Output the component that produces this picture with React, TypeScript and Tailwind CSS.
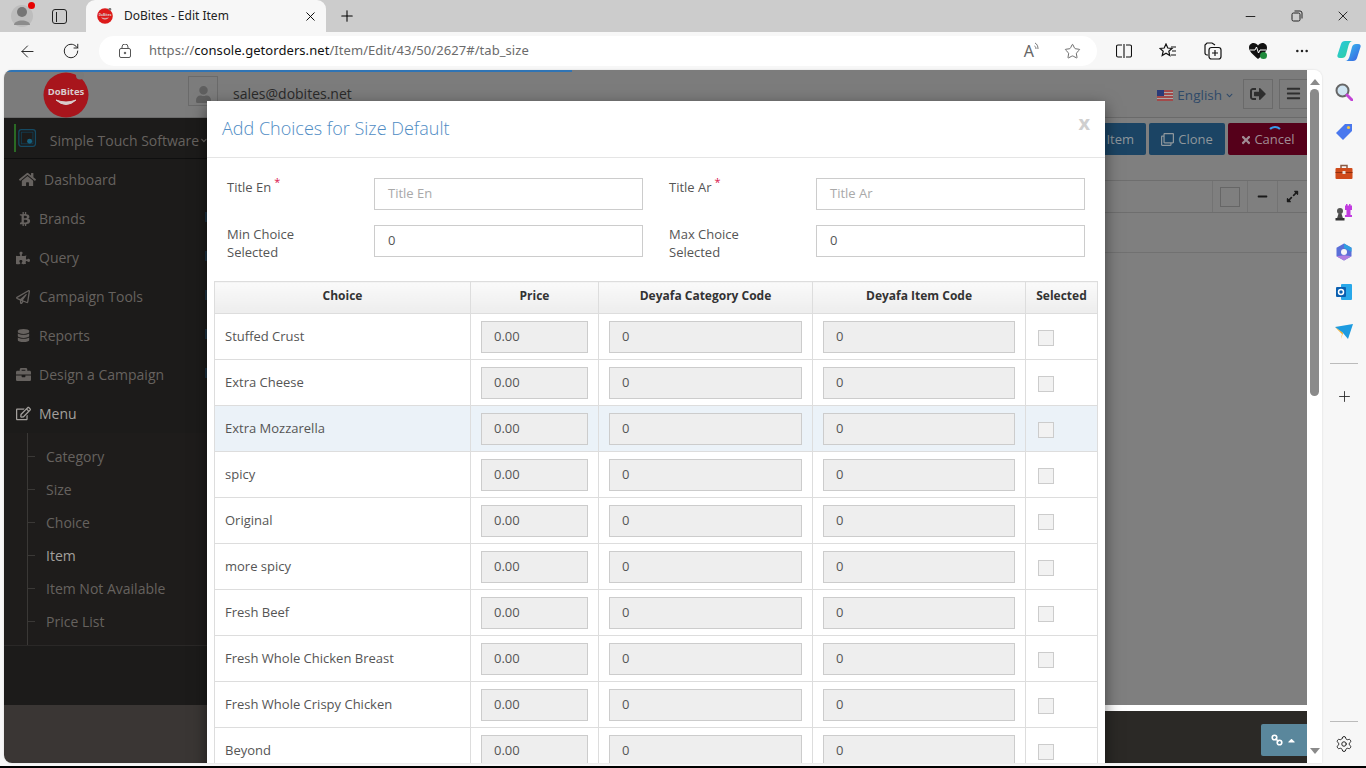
import { ArrowLeft, Minus, MoreHorizontal, Plus, RotateCw, Settings, Star, X } from "lucide-react";
import {
  FaBars,
  FaBriefcase,
  FaBtc,
  FaChevronDown,
  FaCaretUp,
  FaDatabase,
  FaHome,
  FaMinus,
  FaPuzzlePiece,
  FaRegClone,
  FaRegEdit,
  FaRegPaperPlane,
  FaExpandAlt,
  FaSignOutAlt,
  FaTimes,
  FaUser,
} from "react-icons/fa";

const choices = [
  "Stuffed Crust",
  "Extra Cheese",
  "Extra Mozzarella",
  "spicy",
  "Original",
  "more spicy",
  "Fresh Beef",
  "Fresh Whole Chicken Breast",
  "Fresh Whole Crispy Chicken",
  "Beyond",
];

const sideItems = [
  { label: "Brands", icon: <FaBtc size={14} className="ml-[2px]" /> },
  { label: "Query", icon: <FaPuzzlePiece size={14} /> },
  { label: "Campaign Tools", icon: <FaRegPaperPlane size={14} /> },
  { label: "Reports", icon: <FaDatabase size={13} className="ml-[1px]" /> },
  { label: "Design a Campaign", icon: <FaBriefcase size={15} /> },
];

const subItems = ["Category", "Size", "Choice", "Item", "Item Not Available", "Price List"];

function Logo({ size }: { size: number }) {
  return (
    <svg width={size} height={size} viewBox="0 0 46 46" className="shrink-0">
      <circle cx="23" cy="23" r="22.5" fill="currentColor" />
      <circle cx="37" cy="3.500" r="4" fill="#7a7a7a" />
      <text x="23" y="23" textAnchor="middle" fontSize="9.500" fontWeight="700" fill="#d9cccc" fontFamily="'Open Sans', sans-serif">
        DoBites
      </text>
      <path d="M13 28 Q23 37 33 28 Q23 32 13 28Z" fill="#d9cccc" stroke="#d9cccc" strokeWidth="1" />
    </svg>
  );
}

function TabStrip() {
  return (
    <div className="flex h-8 items-center bg-[#cccccc] text-black">
      <div className="relative ml-[11px] flex h-[22px] w-[22px] items-center justify-center rounded-full bg-[#bdbdbd]">
        <svg width="18" height="20" viewBox="0 0 18 20">
          <circle cx="9" cy="6" r="5" fill="#767676" />
          <path d="M1 19 C1 13 17 13 17 19 Z" fill="#8c8c8c" />
        </svg>
        <span className="absolute right-[-2px] top-[-3px] h-[7px] w-[7px] rounded-full bg-[#e60000]" />
      </div>
      <div className="ml-[19px] flex h-[15px] w-[15px] rounded-[3px] border-[1.5px] border-[#222]">
        <span className="mt-[2px] h-[10px] w-[4px] border-r border-[#222]" />
      </div>
      <div className="ml-[19px] flex h-8 w-[240px] items-center rounded-t-[9px] bg-[#f7f7f7] pl-[11px]">
        <span className="text-[#dd1a1a]">
          <Logo size={16} />
        </span>
        <span className="ml-[11px] font-['Noto_Sans',sans-serif] text-[12px] text-[#222]">DoBites - Edit Item</span>
        <X size={15} strokeWidth={1.5} className="ml-[74px]" />
      </div>
      <Plus size={18} strokeWidth={1.4} className="ml-3" />
      <div className="ml-auto flex items-center">
        <Minus size={15} strokeWidth={1.3} />
        <svg width="12" height="12" viewBox="0 0 12 12" fill="none" stroke="#222" className="ml-[33px]">
          <rect x="1" y="3" width="8" height="8" rx="1.5" />
          <path d="M3.5 1h5.5a2 2 0 0 1 2 2v5.5" />
        </svg>
        <X size={16} strokeWidth={1.2} className="ml-[32px] mr-[15px]" />
      </div>
    </div>
  );
}

function ToolBar() {
  return (
    <div className="flex h-[38px] items-center bg-[#f7f7f7] text-[#222]">
      <ArrowLeft size={19} strokeWidth={1.2} className="ml-[18px]" />
      <RotateCw size={18} strokeWidth={1.3} className="ml-[25px]" />
      <div className="ml-[19px] flex h-[30px] w-[998px] items-center rounded-full bg-white pl-[20px] pr-[16px]">
        <svg width="12" height="14" viewBox="0 0 12 14" fill="none" stroke="#555" strokeWidth="1">
          <rect x="0.5" y="4.5" width="11" height="9" rx="1.5" />
          <path d="M3 4.5V3a3 3 0 0 1 6 0v1.5" />
          <circle cx="6" cy="9" r="0.8" fill="#555" />
        </svg>
        <span className="ml-[18px] font-['Noto_Sans',sans-serif] text-[13px] tracking-[0.06px] text-[#6b6b6b]">
          https://<span className="text-[#111]">console.getorders.net</span>/Item/Edit/43/50/2627#/tab_size
        </span>
        <span className="ml-auto flex items-start text-[#666]">
          <span className="font-['Noto_Sans',sans-serif] text-[16px] leading-[18px]">A</span>
          <svg width="6" height="9" viewBox="0 0 6 9" fill="none" stroke="#777">
            <path d="M1 1c2 1 3 3 3 6M0.500 4c1 .5 1.500 1.500 1.500 3" />
          </svg>
        </span>
        <Star size={17} strokeWidth={1.2} className="ml-[24px] text-[#555]" />
      </div>
      <svg width="16" height="14" viewBox="0 0 16 14" fill="none" stroke="#111" strokeWidth="1.100" className="ml-[19px]">
        <path d="M6 1H2a1.500 1.500 0 0 0-1.500 1.500v9A1.500 1.500 0 0 0 2 13h4M10 1h4a1.500 1.500 0 0 1 1.500 1.500v9A1.500 1.500 0 0 1 14 13h-4M8 0v14" />
      </svg>
      <svg width="18" height="16" viewBox="0 0 18 16" fill="none" stroke="#111" strokeWidth="1.2" className="ml-[27px]">
        <path d="M7 1l1.800 4 4.200.4-3.200 2.800 1 4.300L7 10.200 3.200 12.500l1-4.300L1 5.400 5.200 5z" />
        <path d="M12 4h5M13 8h4M12 12h5" />
      </svg>
      <svg width="18" height="18" viewBox="0 0 18 18" fill="none" stroke="#111" strokeWidth="1.2" className="ml-[27px]">
        <path d="M4 13H3a2 2 0 0 1-2-2V3l2-2h5l3 2" />
        <rect x="5" y="5.500" width="12" height="11.500" rx="2.500" />
        <path d="M11 8v6M8 11h6" />
      </svg>
      <svg width="20" height="18" viewBox="0 0 20 18" className="ml-[26px]">
        <path d="M10 17 C4 12 1 9 1 5.500 C1 2.500 3.500 1 5.500 1 C7.500 1 9 2 10 3.500 C11 2 12.500 1 14.500 1 C16.500 1 19 2.500 19 5.500 C19 9 16 12 10 17Z" fill="#111" />
        <path d="M2 8h5l1.500-3 2 6 1.500-3h6" stroke="#fff" strokeWidth="1" fill="none" />
        <circle cx="15.500" cy="13.500" r="3.500" fill="#1f8a3b" />
      </svg>
      <MoreHorizontal size={16} strokeWidth={1.8} className="ml-[26px]" />
      <svg width="24" height="22" viewBox="0 0 24 22" className="ml-[27px]">
        <defs>
          <linearGradient id="cpA" x1="0" y1="0" x2="1" y2="1">
            <stop offset="0" stopColor="#35c6f0" />
            <stop offset="1" stopColor="#3a5ce0" />
          </linearGradient>
          <linearGradient id="cpB" x1="0" y1="0" x2="1" y2="1">
            <stop offset="0" stopColor="#2ac7e0" />
            <stop offset="1" stopColor="#2fd19a" />
          </linearGradient>
        </defs>
        <path d="M8 1h8c-2.500 0-3.800 2-4.500 4.500L9 15c-.6 2-2 3-4 3H3C.5 18 0 16.500.5 15L4 4c.6-2 2-3 4-3z" fill="url(#cpB)" />
        <path d="M16 21H8c2.500 0 3.800-2 4.500-4.500L15 7c.6-2 2-3 4-3h2c2.500 0 3 1.500 2.500 3L20 18c-.6 2-2 3-4 3z" fill="url(#cpA)" />
      </svg>
    </div>
  );
}

function SideRail() {
  return (
    <div className="flex w-[44px] shrink-0 flex-col items-center bg-[#f7f7f7] pt-[13px]">
      <svg width="18" height="18" viewBox="0 0 18 18" fill="none">
        <circle cx="7.500" cy="7.500" r="6" fill="#cfe4f2" stroke="#666" strokeWidth="2" />
        <path d="M12 12l5 5" stroke="#c244d6" strokeWidth="3" strokeLinecap="round" />
      </svg>
      <svg width="18" height="18" viewBox="0 0 18 18" className="mt-[22px]">
        <path d="M10 1h7v7L8 17 1 10z" fill="#4a78ee" />
        <circle cx="13.500" cy="4.500" r="1.600" fill="#f5c542" />
      </svg>
      <svg width="18" height="18" viewBox="0 0 18 18" className="mt-[22px]" fill="none">
        <path d="M6 5V2.500h6V5" stroke="#8a5a44" strokeWidth="1.500" />
        <rect x="0.500" y="5" width="17" height="11" rx="1" fill="#cf4a1a" />
        <rect x="0.500" y="9" width="17" height="1" fill="#8f2f0e" />
        <rect x="7.500" y="8" width="3" height="3" fill="#e8e0d8" />
      </svg>
      <svg width="18" height="18" viewBox="0 0 18 18" className="mt-[22px]">
        <path d="M11 1h1.500v1.500H14V1h1.500v1.500H17V7h-1.500v5H17v2h-7v-2h1.500V7H10V2.500h1z" fill="#c13be0" />
        <circle cx="5" cy="8" r="3" fill="#555" />
        <path d="M3.500 10.500h3l1.500 5H2z" fill="#4b4b4b" />
        <rect x="0.500" y="15" width="9" height="2.500" fill="#333" />
      </svg>
      <svg width="18" height="18" viewBox="0 0 18 18" className="mt-[22px]">
        <path d="M9 0.500l7.500 4.300v8.400L9 17.500l-7.500-4.300V4.800z" fill="#5a6fd8" />
        <path d="M9 0.500l7.500 4.300v4L9 5z" fill="#2f9fe0" />
        <path d="M1.500 13.200L9 17.500l7.500-4.300-7-1z" fill="#b27fe0" />
        <circle cx="9" cy="9" r="3" fill="#f7f7f7" />
      </svg>
      <svg width="18" height="18" viewBox="0 0 18 18" className="mt-[22px]">
        <rect x="6" y="1" width="11" height="16" rx="1" fill="#28a8ea" />
        <rect x="1" y="4" width="10" height="10" rx="1" fill="#0a5fb0" />
        <circle cx="6" cy="9" r="2.500" fill="none" stroke="#fff" strokeWidth="1.500" />
      </svg>
      <svg width="18" height="16" viewBox="0 0 18 16" className="mt-[23px]">
        <path d="M0 3l18-3-5 15-5-6z" fill="#1d9be0" />
        <path d="M0 3l8 6-2 6 1-5z" fill="#f2a91e" />
      </svg>
      <div className="mt-[23px] h-px w-7 bg-[#bbb]" />
      <Plus size={17} strokeWidth={1.2} className="mt-[24px] text-[#222]" />
      <div className="mt-auto h-px w-7 bg-[#bbb]" />
      <Settings size={18} strokeWidth={1.3} className="mb-[10px] mt-[13px] text-[#222]" />
    </div>
  );
}

function Sidebar() {
  return (
    <div className="flex w-[203px] shrink-0 flex-col bg-[#3a3634] font-['Open_Sans',sans-serif] text-[14px] text-[#66625f]">
      <div className="flex h-[41px] shrink-0 items-center border-b border-[#0f0f0f] bg-[#1c1b1a] pl-[10px]">
        <span className="h-[28px] w-[3px] bg-[#2a6a24]" />
        <svg width="22" height="22" viewBox="0 0 22 22" fill="none" className="ml-[2px]">
          <rect x="1" y="1" width="20" height="20" rx="3" stroke="#154a63" strokeWidth="1.500" />
          <rect x="4" y="4" width="14" height="14" stroke="#123f55" />
          <circle cx="14" cy="15" r="3" fill="#16617f" />
        </svg>
        <span className="ml-[13px] mt-1 whitespace-nowrap text-[14px]">Simple Touch Software</span>
        <FaChevronDown size={7} className="ml-[2px] mt-1" />
      </div>
      <div className="flex h-[546px] flex-col bg-[#1c1b1a]">
        <div className="flex h-[40px] shrink-0 items-center pl-[15px]">
          <FaHome size={17} />
          <span className="ml-2">Dashboard</span>
        </div>
        {sideItems.map((item) => (
          <div key={item.label} className="relative flex h-[39px] shrink-0 items-center pl-[12px]">
            <span className="flex w-[23px] justify-start">{item.icon}</span>
            <span className="whitespace-nowrap">{item.label}</span>
            <span className="absolute right-0 top-[13px] h-[10px] w-[2px] bg-[#1e3342]" />
          </div>
        ))}
        <div className="flex h-[39px] shrink-0 items-center pl-[12px] text-[#a3a09d]">
          <span className="flex w-[23px] justify-start">
            <FaRegEdit size={15} />
          </span>
          <span>Menu</span>
        </div>
        <div className="relative flex h-[213px] shrink-0 flex-col border-b border-[#2a2827] bg-[#1e1c1b] pt-[7px]">
          <span className="absolute bottom-0 left-[23px] top-0 w-px bg-[#3a3836]" />
          {subItems.map((item) => (
            <div key={item} className={`flex h-[33px] shrink-0 items-center pl-[23px] ${item === "Item" ? "text-[#a3a09d]" : ""}`}>
              <span className="mr-[11px] h-px w-[8px] bg-[#3a3836]" />
              <span className="whitespace-nowrap">{item}</span>
            </div>
          ))}
        </div>
      </div>
    </div>
  );
}

function MainArea() {
  return (
    <div className="flex min-w-0 flex-1 flex-col bg-[#7f7f7f] font-['Open_Sans',sans-serif]">
      <div className="flex h-[56px] shrink-0 items-start justify-end gap-[3px] pt-[5px] text-[13px] text-[#8f979c]">
        <div className="flex h-8 w-[60px] items-center justify-end rounded-[2px] bg-[#1b4464] pr-3 pt-px">Item</div>
        <div className="flex h-8 w-[76px] items-center justify-center gap-1 rounded-[2px] bg-[#1b4464] pt-px">
          <FaRegClone size={13} />
          Clone
        </div>
        <div className="relative flex h-8 w-[79px] items-center justify-center gap-[2px] rounded-l-[2px] bg-[#55001a] pt-px text-[#a08c94]">
          <FaTimes size={12} />
          Cancel
          <span className="absolute left-[39px] top-[3px] h-[16px] w-[16px] rounded-full border-2 border-transparent border-t-[#3a9bec]" />
        </div>
      </div>
      <div className="mt-[6px] flex h-[33px] shrink-0 items-stretch justify-end border-y border-[#6e6e6e]">
        <div className="flex w-[35px] items-center justify-center border-l border-[#737373]">
          <span className="h-5 w-5 border border-[#666]" />
        </div>
        <div className="flex w-[30px] items-center justify-center border-l border-[#737373] text-[#1a1a1a]">
          <FaMinus size={11} />
        </div>
        <div className="flex w-[30px] items-center justify-center border-l border-[#737373] text-[#1a1a1a]">
          <FaExpandAlt size={13} />
        </div>
      </div>
      <div className="h-[40px] shrink-0 border-b border-[#717171]" />
      <div className="flex-1" />
    </div>
  );
}

function Field({ label, placeholder, value, required }: { label: string; placeholder?: string; value?: string; required?: boolean }) {
  return (
    <div className="flex items-start">
      <label className="w-[152px] shrink-0 pl-[5px] text-[13px] leading-[18px] text-[#555]">
        <span className="relative block w-[90px]">
          {label}
          {required && <span className="absolute top-[-5px] ml-[3px] text-[11px] text-[#d9144b]">*</span>}
        </span>
      </label>
      <div className="flex h-8 w-[269px] items-center border border-[#ccc] bg-white pl-[13px] text-[13px]">
        {placeholder ? <span className="text-[#a9a9a9]">{placeholder}</span> : <span className="text-[#555]">{value}</span>}
      </div>
    </div>
  );
}

function ChoiceRow({ name, active }: { name: string; active: boolean }) {
  const cell = "h-[46px] border border-[#ddd] p-0 align-middle";
  const box = "flex h-8 items-center border border-[#ccc] bg-[#eeeeee] pl-[12px] text-[13px] text-[#555]";
  return (
    <tr className={active ? "bg-[#ebf2f8]" : "bg-white"}>
      <td className={`${cell} pl-[10px] text-[13px] text-[#555]`}>{name}</td>
      <td className={`${cell} px-[10px]`}>
        <div className={box}>0.00</div>
      </td>
      <td className={`${cell} px-[10px]`}>
        <div className={box}>0</div>
      </td>
      <td className={`${cell} px-[10px]`}>
        <div className={box}>0</div>
      </td>
      <td className={`${cell} pl-[12px]`}>
        <div className="mt-[2px] h-4 w-4 border border-[#ccc] bg-[#f2f2f2]" />
      </td>
    </tr>
  );
}

function ChoicesModal() {
  const head = "h-8 border border-[#ddd] bg-gradient-to-b from-[#fafafa] to-[#ededed] p-0 pb-1 text-center text-[12px] font-bold text-[#333]";
  return (
    <div className="absolute left-[203px] top-[31px] w-[898px] bg-white font-['Open_Sans',sans-serif] shadow-[0_5px_15px_rgba(0,0,0,0.5)]">
      <div className="flex h-[57px] items-center justify-between border-b border-[#e5e5e5] pl-[15px] pr-[15px]">
        <h4 className="mb-[2px] text-[18px] font-light text-[#4f8cc4]">Add Choices for Size Default</h4>
        <span className="mb-[13px] text-[20px] font-bold text-[#cfcfcf]">x</span>
      </div>
      <div className="grid grid-cols-[421px_421px] gap-x-[21px] gap-y-[15px] pl-[15px] pt-[20px]">
        <Field label="Title En" placeholder="Title En" required />
        <Field label="Title Ar" placeholder="Title Ar" required />
        <Field label="Min Choice Selected" value="0" />
        <Field label="Max Choice Selected" value="0" />
      </div>
      <table className="ml-[7px] mt-[20px] w-[883px] table-fixed border-collapse">
        <colgroup>
          <col className="w-[256px]" />
          <col className="w-[128px]" />
          <col className="w-[214px]" />
          <col className="w-[213px]" />
          <col className="w-[72px]" />
        </colgroup>
        <thead>
          <tr>
            <th className={head}>Choice</th>
            <th className={head}>Price</th>
            <th className={head}>Deyafa Category Code</th>
            <th className={head}>Deyafa Item Code</th>
            <th className={head}>Selected</th>
          </tr>
        </thead>
        <tbody>
          {choices.map((name) => (
            <ChoiceRow key={name} name={name} active={name === "Extra Mozzarella"} />
          ))}
        </tbody>
      </table>
    </div>
  );
}

function PageHeader() {
  return (
    <div className="flex h-[48px] shrink-0 items-center border-b border-[#6a6a6a] bg-[#7c7c7c] font-['Open_Sans',sans-serif]">
      <span className="ml-[39px] mt-[2px] text-[#a8151c]">
        <Logo size={46} />
      </span>
      <div className="ml-[99px] mt-[-5px] flex h-[30px] w-[30px] items-center justify-center border border-[#6a6a6a] pt-[6px] text-[#5f5f5f]">
        <FaUser size={17} />
      </div>
      <span className="ml-[15px] text-[14px] text-[#2a2a2a]">sales@dobites.net</span>
      <div className="ml-auto flex items-center">
        <svg width="16" height="11" viewBox="0 0 16 11" className="mt-[4px]">
          <rect width="16" height="11" fill="#a34a4a" />
          <path d="M0 2.500h16M0 5.500h16M0 8.500h16" stroke="#ababab" />
          <rect width="7" height="6" fill="#2a3a78" />
        </svg>
        <span className="ml-1 mt-[4px] text-[13.500px] text-[#2f4a69]">English</span>
        <FaChevronDown size={7} className="ml-1 mt-[4px] text-[#2f4a69]" />
        <div className="ml-[10px] flex h-[30px] w-[30px] items-center justify-center border border-[#6a6a6a] text-[#2e2e2e]">
          <FaSignOutAlt size={16} />
        </div>
        <div className="ml-[6px] flex h-[30px] w-[28px] items-center justify-center border border-r-0 border-[#6a6a6a] text-[#2e2e2e]">
          <FaBars size={15} />
        </div>
      </div>
    </div>
  );
}

function ScrollBar() {
  return (
    <div className="flex w-[15px] shrink-0 flex-col items-center bg-white pt-[9px]">
      <span className="h-0 w-0 border-x-[5px] border-b-[6px] border-x-transparent border-b-[#8a8a8a]" />
      <span className="mt-[4px] h-[307px] w-[9px] rounded-full bg-[#8a8a8a]" />
      <span className="mb-[9px] mt-auto h-0 w-0 border-x-[5px] border-t-[6px] border-x-transparent border-t-[#8a8a8a]" />
    </div>
  );
}

export default function App() {
  return (
    <div className="flex h-screen w-full flex-col overflow-hidden bg-[#f7f7f7]">
      <TabStrip />
      <ToolBar />
      <div className="flex h-[693px] shrink-0 pl-1">
        <div className="relative flex min-w-0 flex-1 overflow-hidden rounded-l-[8px] rounded-tr-[8px] shadow-[0_0_2px_rgba(0,0,0,0.15)]">
          <span className="absolute left-0 top-0 z-10 h-[2px] w-[568px] bg-[#2f74b5]" />
          <div className="flex min-w-0 flex-1 flex-col">
            <PageHeader />
            <div className="flex h-[587px] shrink-0">
              <Sidebar />
              <MainArea />
            </div>
            <div className="flex min-h-0 flex-1">
              <div className="w-[203px] shrink-0 bg-[#3a3634]" />
              <div className="flex min-w-0 flex-1 flex-col">
                <div className="h-[6px] shrink-0 bg-white" />
                <div className="flex flex-1 items-start justify-end bg-[#2b2926] pt-[13px]">
                  <div className="flex h-[32px] w-[46px] items-center justify-center gap-[3px] rounded-l-[2px] bg-[#5a879c] text-white">
                    <svg width="12" height="12" viewBox="0 0 12 12" fill="none" stroke="#fff" strokeWidth="1.600">
                      <circle cx="3.500" cy="3.500" r="2.300" />
                      <circle cx="8.500" cy="8.500" r="2.300" />
                      <path d="M4.500 4.500l3 3" />
                    </svg>
                    <FaCaretUp size={11} />
                  </div>
                </div>
              </div>
            </div>
          </div>
          <ScrollBar />
          <ChoicesModal />
        </div>
        <SideRail />
      </div>
      <div className="mt-[3px] h-[2px] w-full shrink-0 bg-black" />
    </div>
  );
}
